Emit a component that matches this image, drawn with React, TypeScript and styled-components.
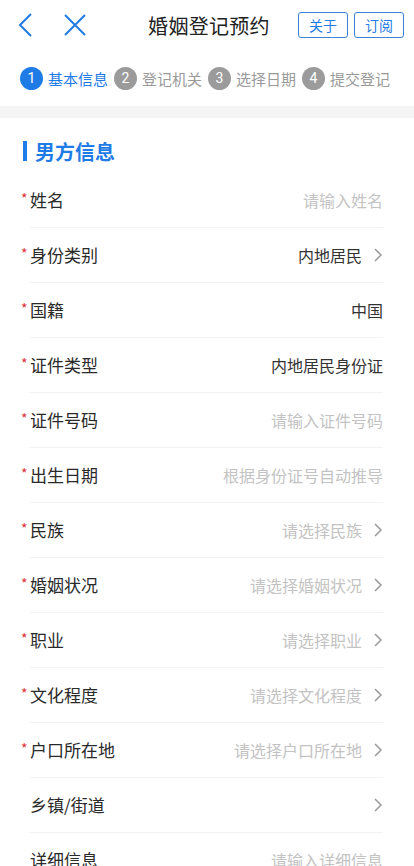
import React from "react"
import styled, { createGlobalStyle } from "styled-components"

const GlobalStyle = createGlobalStyle`
  html, body {
    margin: 0;
    padding: 0;
    background: #fff;
    font-family: "Noto Sans CJK SC", "Noto Sans", sans-serif;
  }
  * { box-sizing: border-box; }
`

const BLUE = "#1f7be6"

const Page = styled.div`
  width: 414px;
  height: 866px;
  overflow: hidden;
  background: #fff;
`

const NavBar = styled.div`
  height: 50px;
  display: grid;
  grid-template-columns: 1fr auto 1fr;
  align-items: center;
  padding: 0 10px 0 14px;
`

const NavIcons = styled.div`
  display: flex;
  align-items: center;
  gap: 28px;
`

const IconButton = styled.div`
  display: flex;
  align-items: center;
  justify-content: center;
  width: 22px;
  height: 28px;
`

const Title = styled.div`
  font-size: 20px;
  color: #222;
  text-align: center;
  letter-spacing: 0.3px;
  white-space: nowrap;
`

const NavActions = styled.div`
  display: flex;
  justify-content: flex-end;
  gap: 6px;
`

const OutlineButton = styled.div`
  width: 50px;
  height: 26px;
  border: 1px solid #3b82d6;
  border-radius: 3px;
  color: ${BLUE};
  font-size: 14px;
  display: flex;
  align-items: center;
  justify-content: center;
`

const Steps = styled.div`
  height: 56px;
  display: flex;
  align-items: center;
  padding: 0 0 0 20px;
  gap: 6px;
`

const Step = styled.div`
  display: flex;
  align-items: center;
  flex-shrink: 0;
  gap: 5px;
`

const StepDot = styled.div<{ $active?: boolean }>`
  width: 23px;
  height: 23px;
  border-radius: 50%;
  background: ${(p) => (p.$active ? BLUE : "#9b9b9b")};
  color: #fff;
  font-size: 14px;
  font-family: "Roboto", "Noto Sans", sans-serif;
  display: flex;
  align-items: center;
  justify-content: center;
`

const StepLabel = styled.span<{ $active?: boolean }>`
  font-size: 15px;
  white-space: nowrap;
  color: ${(p) => (p.$active ? BLUE : "#9a9a9a")};
`

const Band = styled.div`
  height: 12px;
  background: #f5f5f5;
`

const SectionTitle = styled.div`
  height: 55px;
  display: flex;
  align-items: center;
  padding: 11px 0 0 23px;
  gap: 8px;
  font-size: 20px;
  font-weight: 700;
  color: ${BLUE};
`

const Bar = styled.span`
  width: 4px;
  height: 20px;
  background: ${BLUE};
`

const Rows = styled.div`
  margin: 0 31px 0 30px;
`

const Row = styled.div`
  height: 55px;
  display: flex;
  align-items: center;
  justify-content: space-between;
  border-bottom: 1px solid #f2f2f2;
  padding-bottom: 1px;
`

const Label = styled.div`
  position: relative;
  font-size: 17px;
  color: #2a2a2a;
`

const Star = styled.span`
  position: absolute;
  left: -9px;
  top: 1px;
  color: #e0303a;
  font-size: 14px;
`

const Value = styled.div<{ $placeholder?: boolean }>`
  display: flex;
  align-items: center;
  gap: 11px;
  font-size: 16px;
  color: ${(p) => (p.$placeholder ? "#c3c3c3" : "#333")};
`

const Chevron = () => (
  <svg width="10" height="16" viewBox="0 0 10 16">
    <path d="M2 2 L8 8 L2 14" fill="none" stroke="#9a9a9a" strokeWidth="1.5" />
  </svg>
)

type Field = {
  label: string
  value: string
  required?: boolean
  placeholder?: boolean
  arrow?: boolean
}

const fields: Field[] = [
  { label: "姓名", value: "请输入姓名", required: true, placeholder: true },
  { label: "身份类别", value: "内地居民", required: true, arrow: true },
  { label: "国籍", value: "中国", required: true },
  { label: "证件类型", value: "内地居民身份证", required: true },
  { label: "证件号码", value: "请输入证件号码", required: true, placeholder: true },
  { label: "出生日期", value: "根据身份证号自动推导", required: true, placeholder: true },
  { label: "民族", value: "请选择民族", required: true, placeholder: true, arrow: true },
  { label: "婚姻状况", value: "请选择婚姻状况", required: true, placeholder: true, arrow: true },
  { label: "职业", value: "请选择职业", required: true, placeholder: true, arrow: true },
  { label: "文化程度", value: "请选择文化程度", required: true, placeholder: true, arrow: true },
  { label: "户口所在地", value: "请选择户口所在地", required: true, placeholder: true, arrow: true },
  { label: "乡镇/街道", value: "", arrow: true },
  { label: "详细信息", value: "请输入详细信息", placeholder: true }
]

const steps = ["基本信息", "登记机关", "选择日期", "提交登记"]

export default function App() {
  return (
    <Page>
      <GlobalStyle />
      <NavBar>
        <NavIcons>
          <IconButton>
            <svg width="16" height="26" viewBox="0 0 16 26">
              <path d="M14 2 L3 13 L14 24" fill="none" stroke={BLUE} strokeWidth="2" />
            </svg>
          </IconButton>
          <IconButton>
            <svg width="22" height="22" viewBox="0 0 22 22">
              <path d="M1 1 L21 21 M21 1 L1 21" fill="none" stroke={BLUE} strokeWidth="2" />
            </svg>
          </IconButton>
        </NavIcons>
        <Title>婚姻登记预约</Title>
        <NavActions>
          <OutlineButton>关于</OutlineButton>
          <OutlineButton>订阅</OutlineButton>
        </NavActions>
      </NavBar>
      <Steps>
        {steps.map((s, i) => (
          <Step key={s}>
            <StepDot $active={i === 0}>{i + 1}</StepDot>
            <StepLabel $active={i === 0}>{s}</StepLabel>
          </Step>
        ))}
      </Steps>
      <Band />
      <SectionTitle>
        <Bar />
        男方信息
      </SectionTitle>
      <Rows>
        {fields.map((f) => (
          <Row key={f.label}>
            <Label>
              {f.required && <Star>*</Star>}
              {f.label}
            </Label>
            <Value $placeholder={f.placeholder}>
              {f.value && <span>{f.value}</span>}
              {f.arrow && <Chevron />}
            </Value>
          </Row>
        ))}
      </Rows>
    </Page>
  )
}
